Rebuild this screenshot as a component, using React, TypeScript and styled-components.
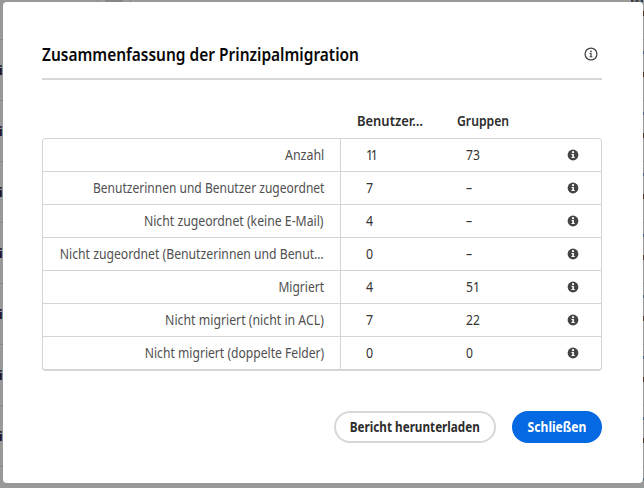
import React from "react";
import styled, { createGlobalStyle } from "styled-components";

const Global = createGlobalStyle`
  * { box-sizing: border-box; }
  body { margin: 0; background: #999; font-family: "Noto Sans", "Open Sans", sans-serif; overflow: hidden; }
`;

const Screen = styled.div`
  position: relative;
  width: 644px;
  height: 488px;
  overflow: hidden;
  background: #999;
`;

const Backdrop = styled.div`
  display: flex;
  flex-direction: column;
  margin-top: -21px;
`;

const BackRow = styled.div`
  flex: none;
  display: flex;
  align-items: center;
  justify-content: space-between;
  height: 61px;
  border-bottom: 1px solid #868686;
  color: #10101c;
  font-size: 12px;
  font-weight: 700;
`;

const RowStart = styled.span`
  margin-left: -1px;
`;

const RowEnd = styled.span`
  width: 1px;
  height: 26px;
  margin-top: -12px;
  border-top: 3px solid #4d6480;
  border-bottom: 5px solid #50352b;
`;

const TopTab = styled.div`
  position: absolute;
  left: 97px;
  top: 0;
  width: 34px;
  height: 2px;
  padding: 0 7px;
  border: solid #868686;
  border-width: 0 1px;
  &::before {
    content: "";
    display: block;
    height: 2px;
    background: #868686;
  }
`;

const TopMark = styled.div`
  position: absolute;
  left: 631px;
  top: 0;
  width: 12px;
  height: 2px;
  background: repeating-linear-gradient(90deg, #28405c 0 2px, #8a6a3c 2px 3px, #777 3px 5px);
`;

const Modal = styled.section`
  position: absolute;
  left: 3px;
  top: 2px;
  width: 640px;
  height: 481px;
  padding: 37px 41px 0 39px;
  display: flex;
  flex-direction: column;
  background: #fff;
  border-radius: 4px;
`;

const Header = styled.header`
  display: flex;
  align-items: center;
  justify-content: space-between;
  height: 41px;
  padding: 0 4px 10px 0;
  border-bottom: 2px solid #d8d8d8;
`;

/* Horizontally condensed run of text. */
const Narrow = styled.span<{ $scale: number; $from?: string; $track?: number }>`
  display: block;
  flex: none;
  letter-spacing: ${(p) => p.$track ?? 0}px;
  transform: scaleX(${(p) => p.$scale});
  transform-origin: ${(p) => p.$from ?? "left"} center;
`;

const Title = styled.h1`
  margin: 0;
  font-size: 17.5px;
  line-height: 24px;
  font-weight: 600;
  color: #080808;
  white-space: nowrap;
`;

const columns = "298px 100px 126px 1fr";

const HeadRow = styled.div`
  display: grid;
  grid-template-columns: ${columns};
  height: 34px;
  margin-top: 23px;
  margin-bottom: 1px;
  align-items: center;
`;

const HeadCell = styled.div`
  padding-left: 17px;
  font-size: 14px;
  font-weight: 600;
  color: #2c2c2c;
  white-space: nowrap;
`;

const Table = styled.div`
  border: 1px solid #d5d5d5;
  border-bottom-width: 2px;
  border-radius: 4px;
`;

const Row = styled.div`
  display: grid;
  grid-template-columns: ${columns};
  height: 33px;
  border-bottom: 1px solid #d5d5d5;
  &:last-child { border-bottom: 0; height: 32px; }
`;

const Label = styled.div`
  display: flex;
  justify-content: flex-end;
  min-width: 0;
  padding-right: 16px;
  border-right: 1px solid #d5d5d5;
  font-size: 14px;
  line-height: 32px;
  color: #505050;
  white-space: nowrap;
`;

const Value = styled.div`
  padding-left: 25px;
  font-size: 13.5px;
  line-height: 33px;
  color: #333;
`;

const IconCell = styled.div`
  display: flex;
  align-items: flex-start;
  padding-top: 10px;
`;

const Footer = styled.footer`
  display: flex;
  justify-content: flex-end;
  gap: 16px;
  margin-top: 40px;
`;

const Button = styled.button<{ $primary?: boolean }>`
  display: flex;
  align-items: center;
  justify-content: center;
  width: ${(p) => (p.$primary ? 90 : 162)}px;
  height: 32px;
  padding: 0 0 1px;
  border: 2px solid ${(p) => (p.$primary ? "#0469e3" : "#d8d8d8")};
  border-radius: 16px;
  background: ${(p) => (p.$primary ? "#0469e3" : "#fff")};
  color: ${(p) => (p.$primary ? "#fff" : "#2c2c2c")};
  font: 700 14px "Noto Sans", sans-serif;
  white-space: nowrap;
`;

const InfoOutline = () => (
  <svg width="14" height="14" viewBox="0 0 14 14">
    <circle cx="7" cy="7" r="5.9" fill="none" stroke="#444" strokeWidth="1.3" />
    <circle cx="7" cy="4.4" r="0.9" fill="#444" />
    <path d="M5.6 6h2v3.3h.8v.9H5.6v-.9h.8V6.9h-.8z" fill="#444" />
  </svg>
);

const InfoFilled = () => (
  <svg width="12" height="12" viewBox="0 0 12 12">
    <circle cx="6" cy="6" r="5.4" fill="#444" />
    <circle cx="6" cy="3.2" r="1.1" fill="#fff" />
    <path d="M4.5 5h2.4v3.1h.8v1H4.5v-1h.8V6h-.8z" fill="#fff" />
  </svg>
);

type Entry = {
  label: string;
  scale: number;
  users: string;
  usersTrack?: number;
  groups: string;
};

const rows: Entry[] = [
  { label: "Anzahl", scale: 0.888, users: "11", usersTrack: -2.6, groups: "73" },
  { label: "Benutzerinnen und Benutzer zugeordnet", scale: 0.859, users: "7", groups: "–" },
  { label: "Nicht zugeordnet (keine E-Mail)", scale: 0.874, users: "4", groups: "–" },
  { label: "Nicht zugeordnet (Benutzerinnen und Benut…", scale: 0.872, users: "0", groups: "–" },
  { label: "Migriert", scale: 0.86, users: "4", groups: "51" },
  { label: "Nicht migriert (nicht in ACL)", scale: 0.878, users: "7", groups: "22" },
  { label: "Nicht migriert (doppelte Felder)", scale: 0.866, users: "0", groups: "0" },
];

export default function App() {
  return (
    <Screen>
      <Global />
      <Backdrop>
        {Array.from({ length: 9 }, (_, i) => (
          <BackRow key={i}>
            <RowStart>{i > 0 && i < 8 && "i"}</RowStart>
            <RowEnd />
          </BackRow>
        ))}
      </Backdrop>
      <TopTab />
      <TopMark />
      <Modal>
        <Header>
          <Title>
            <Narrow $scale={0.884}>Zusammenfassung der Prinzipalmigration</Narrow>
          </Title>
          <InfoOutline />
        </Header>
        <HeadRow>
          <span />
          <HeadCell>
            <Narrow $scale={0.925}>Benutzer…</Narrow>
          </HeadCell>
          <HeadCell>
            <Narrow $scale={0.87}>Gruppen</Narrow>
          </HeadCell>
        </HeadRow>
        <Table>
          {rows.map(({ label, scale, users, usersTrack, groups }) => (
            <Row key={label}>
              <Label>
                <Narrow $scale={scale} $from="right">{label}</Narrow>
              </Label>
              <Value>
                <Narrow $scale={0.92} $track={usersTrack}>{users}</Narrow>
              </Value>
              <Value>
                <Narrow $scale={0.9}>{groups}</Narrow>
              </Value>
              <IconCell>
                <InfoFilled />
              </IconCell>
            </Row>
          ))}
        </Table>
        <Footer>
          <Button>
            <Narrow $scale={0.835} $from="center">Bericht herunterladen</Narrow>
          </Button>
          <Button $primary>
            <Narrow $scale={0.865} $from="center">Schließen</Narrow>
          </Button>
        </Footer>
      </Modal>
    </Screen>
  );
}
